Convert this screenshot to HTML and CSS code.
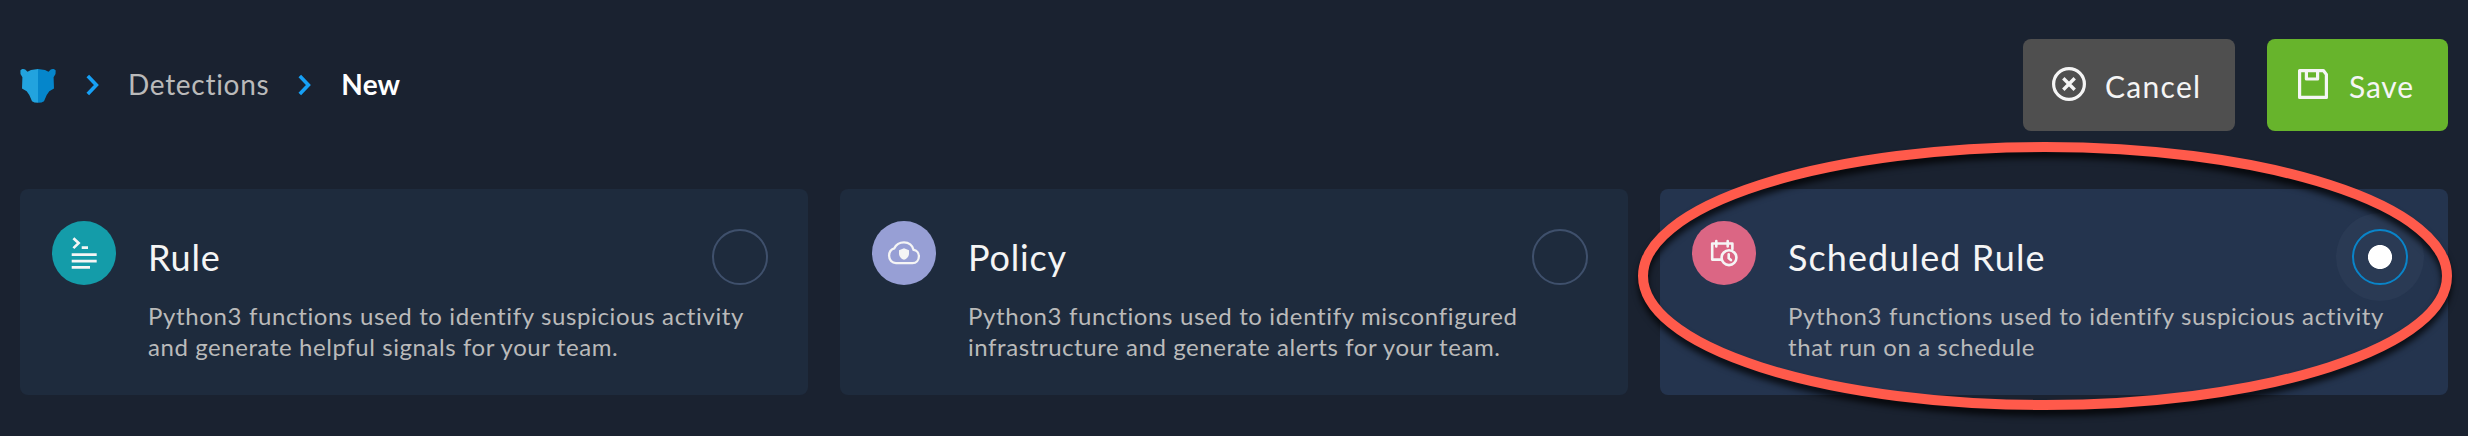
FILE: index.html
```
<!DOCTYPE html>
<html lang="en">
<head>
<meta charset="utf-8">
<title>New detection</title>
<link rel="stylesheet" href="styles.css">
</head>
<body>
<header class="header">
  <nav class="breadcrumbs">
    <svg class="logo" width="37" height="44" viewBox="0 0 37 44">
      <path fill="#22a3de" d="M18 8 11 9 7.5 10.7 5.2 8.4C4 7.6.9 7.6.4 9.6L.5 13 2.4 16.2 2 27.4 6.7 30.2 9.3 34 12 40.2Q14 41.7 18 41.7Z"/>
      <path fill="#0586cb" d="M18 8 25 9 28.5 10.7 30.8 8.4C32 7.6 35.1 7.6 35.7 9.6L35.5 13 33.6 16.2 34 27.4 29.3 30.2 26.7 34 24 40.2Q22 41.7 18 41.7Z"/>
    </svg>
    <svg class="chevron" width="13" height="44" viewBox="0 0 13 44"><path d="M1.8 14.9 10.4 24 1.8 33.1"/></svg>
    <a class="crumb">Detections</a>
    <svg class="chevron" width="13" height="44" viewBox="0 0 13 44"><path d="M1.8 14.9 10.4 24 1.8 33.1"/></svg>
    <span class="crumb current">New</span>
  </nav>
  <div class="actions">
    <button class="button cancel">
      <svg width="34" height="34" viewBox="0 0 34 34"><circle cx="17" cy="17" r="15.4"/><path stroke-width="3.4" d="m11.3 11.3 11.4 11.4m0-11.4L11.3 22.7"/></svg>
      <span class="label">Cancel</span>
    </button>
    <button class="button save">
      <svg width="30" height="30" viewBox="0 0 30 30"><path stroke-linejoin="round" d="M1.6 1.6H25.4L28.4 5.4V28.4H1.6ZM8.4 1.6V10H19.6V1.6"/></svg>
      <span class="label">Save</span>
    </button>
  </div>
</header>
<main class="cards">
  <section class="card">
    <svg class="badge rule" width="64" height="64" viewBox="0 0 64 64">
      <path stroke-width="2.7" d="m21.4 17.2 5.2 4.9-5.2 5M29.7 26.7H36M19.7 33.7h25M19.7 40.1h25M19.7 46.4H38"/>
    </svg>
    <div class="text">
      <h2 class="title">Rule</h2>
      <p class="description"><span class="line">Python3 functions used to identify suspicious activity</span><span class="line">and generate helpful signals for your team.</span></p>
    </div>
    <span class="radio"></span>
  </section>
  <section class="card">
    <svg class="badge policy" width="64" height="64" viewBox="0 0 64 64">
      <path stroke-width="2.3" d="M22.3 27.3C24 23.700 27.600 21.400 32 21.400c4.800 0 8.500 3.100 9.500 7.400 3.100.4 5.400 3 5.400 6.500 0 4-2.700 6.900-6.400 6.900H24c-4 0-6.900-3.200-6.900-7.400 0-3.700 2-6.600 5.200-7.500Z"/>
      <path class="solid" d="m32 27.200 5 2v3.300c0 3-2 5.300-5 6.300-3-1-5-3.300-5-6.300v-3.300Z"/>
    </svg>
    <div class="text">
      <h2 class="title">Policy</h2>
      <p class="description"><span class="line">Python3 functions used to identify misconfigured</span><span class="line">infrastructure and generate alerts for your team.</span></p>
    </div>
    <span class="radio"></span>
  </section>
  <section class="card selected">
    <svg class="badge schedule" width="64" height="64" viewBox="0 0 64 64">
      <path stroke-linejoin="round" stroke-linecap="round" d="M29 38.600H20.200V22.500H40.400V28M24.300 20v5.500M35.700 20v5.500"/>
      <circle cx="37" cy="36.700" r="7.400"/>
      <path stroke-linecap="round" d="M36.700 33.300v3.900l2.200 1.900"/>
    </svg>
    <div class="text">
      <h2 class="title wide">Scheduled Rule</h2>
      <p class="description"><span class="line">Python3 functions used to identify suspicious activity</span><span class="line">that run on a schedule</span></p>
    </div>
    <span class="radio checked"></span>
  </section>
</main>
<svg class="highlight" width="2468" height="436" viewBox="0 0 2468 436"><ellipse cx="2045" cy="276" rx="402" ry="129"/></svg>
</body>
</html>
```
FILE: styles.css
```
* { box-sizing: border-box; }
body {
  position: relative;
  margin: 0;
  height: 436px;
  padding: 39px 20px 0;
  overflow: hidden;
  background: #1a2230;
  color: #f5f5f5;
  font-family: Lato, sans-serif;
  font-variant-ligatures: none;
}
svg { display: block; flex: none; }
.header { display: flex; justify-content: space-between; height: 92px; }
.breadcrumbs { display: flex; align-items: center; gap: 29px; padding-bottom: 4px; }
.chevron path { fill: none; stroke: #16a0f5; stroke-width: 3.6; }
.crumb { padding-top: 2px; color: #bababa; font-size: 28px; line-height: 34px; letter-spacing: .7px; }
.crumb.current { padding-left: 1px; color: #fff; font-weight: 700; letter-spacing: .2px; }

.actions { display: flex; gap: 32px; }
.button {
  display: flex;
  align-items: center;
  height: 92px;
  border: 0;
  border-radius: 8px;
  color: #f5f5f5;
  font: 400 30px/36px Lato, sans-serif;
}
.button svg { margin-bottom: 2px; fill: none; stroke: #f5f5f5; stroke-width: 3.2; }
.label { padding-top: 2px; }
.cancel { width: 212px; padding: 0 0 0 29px; gap: 19px; background: #4f4f4f; letter-spacing: 1.3px; }
.save { width: 181px; padding: 0 0 0 31px; gap: 21px; background: #67b42c; letter-spacing: .85px; }

.cards { display: grid; grid-template-columns: repeat(3, 1fr); gap: 32px; margin-top: 58px; }
.card {
  display: grid;
  grid-template-columns: 64px 1fr auto;
  column-gap: 32px;
  height: 206px;
  padding: 0 40px 0 32px;
  border-radius: 8px;
  background: #1e2b3d;
}
.card.selected { background: #24344e; }
.badge { margin-top: 32px; border-radius: 50%; fill: none; stroke: #f5f5f5; stroke-width: 2.6; }
.badge .solid { fill: #f5f5f5; stroke: none; }
.rule { background: #149ca9; }
.policy { background: #979fd5; }
.schedule { background: #db6684; }
.text { width: 0; padding-top: 46px; white-space: nowrap; }
.title { margin: 0; font-size: 36px; font-weight: 400; line-height: 44px; letter-spacing: .8px; }
.title.wide { letter-spacing: 1.1px; }
.description { margin: 21px 0 0; color: #bababa; font-size: 24px; line-height: 31px; letter-spacing: .57px; }
.line { display: block; }
.line:first-child { letter-spacing: .64px; }
.radio { width: 56px; height: 56px; margin-top: 40px; border: 2px solid #3f506c; border-radius: 50%; }
.radio.checked {
  border-color: #0a84c8;
  background: radial-gradient(circle, #fff 11.6px, #2a3a54 12.4px);
  box-shadow: 0 0 0 16px #2a3a54;
}

.highlight { position: absolute; top: 0; left: 0; pointer-events: none; }
.highlight ellipse { fill: none; stroke: #ff5a4b; stroke-width: 10; filter: drop-shadow(0 6px 3px rgba(0, 0, 0, .75)); }
```
